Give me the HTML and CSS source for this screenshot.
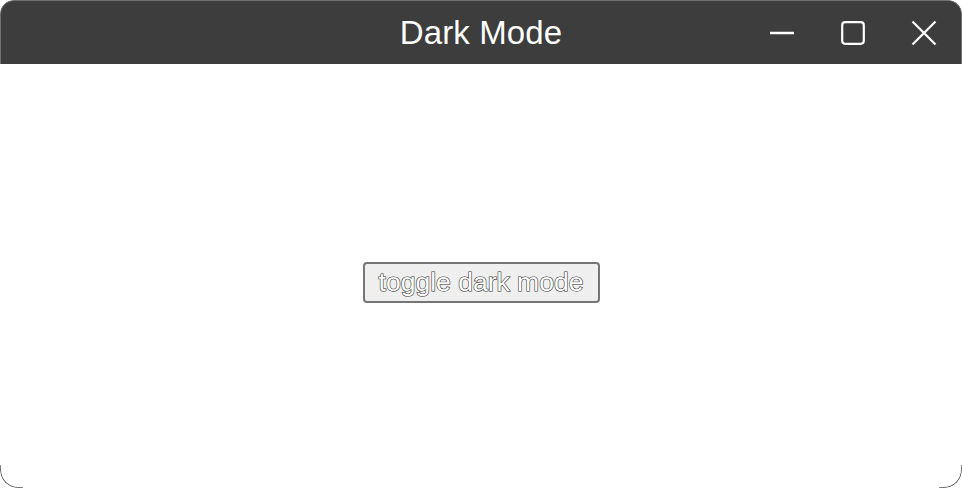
FILE: index.html
```html
<!doctype html>
<html lang="en">
<head>
	<meta charset="UTF-8">
	<title>Dark Mode</title>
	<link rel="stylesheet" href="styles.css">
</head>
<body>
	<div class="window">
		<div class="titlebar">
			<div class="title">Dark Mode</div>
			<div class="controls">
				<span class="ctl ctl_min">
					<svg width="26" height="26" viewBox="0 0 26 26"><path d="M1 13h24" stroke="#fff" stroke-width="2.6" fill="none"/></svg>
				</span>
				<span class="ctl ctl_max">
					<svg width="26" height="26" viewBox="0 0 26 26"><rect x="2.2" y="2.2" width="21.6" height="21.6" rx="3" stroke="#fff" stroke-width="2.2" fill="none"/></svg>
				</span>
				<span class="ctl ctl_close">
					<svg width="26" height="26" viewBox="0 0 26 26"><path d="M1.5 1.5l23 23M24.5 1.5l-23 23" stroke="#fff" stroke-width="2.2" fill="none"/></svg>
				</span>
			</div>
		</div>
		<div class="content">
			<button class="toggle">toggle dark mode</button>
		</div>
	</div>
</body>
</html>
```

FILE: styles.css
```css
html,body{margin: 0;padding: 0;background-color: #fff;}
body{font-family: 'Liberation Sans', Arial, sans-serif;}
.window{
	position: relative;
	width: 962px;
	height: 488px;
	display: flex;
	flex-direction: column;
	border-radius: 14px 14px 18px 18px;
	overflow: hidden;
	background-color: #fff;
}
.window:before,
.window:after{
	content: '';
	position: absolute;
	bottom: 0;
	width: 22px;
	height: 22px;
	border-bottom: 1px solid #555;
}
.window:before{
	left: 0;
	border-left: 1px solid #555;
	border-bottom-left-radius: 18px;
	-webkit-mask: linear-gradient(45deg, #000 35%, transparent 80%);
}
.window:after{
	right: 0;
	border-right: 1px solid #555;
	border-bottom-right-radius: 18px;
	-webkit-mask: linear-gradient(-45deg, #000 35%, transparent 80%);
}
.titlebar{
	position: relative;
	height: 64px;
	box-sizing: border-box;
	border: 1px solid #707070;
	border-bottom: 0;
	border-radius: 14px 14px 0 0;
	background-color: #3d3d3d;
	display: flex;
	align-items: center;
	justify-content: center;
}
.title{
	color: #fff;
	font-size: 33px;
	letter-spacing: 0.1px;
	padding-top: 1px;
}
.controls{
	position: absolute;
	top: 19px;
	right: 24px;
	display: flex;
	gap: 45px;
}
.ctl{
	display: block;
	width: 26px;
	height: 26px;
}
.ctl svg{display: block;}
.content{
	flex: 1;
	display: flex;
	align-items: center;
	justify-content: center;
	padding-top: 12px;
}
.toggle{
	width: 237px;
	height: 41px;
	padding: 0;
	border: 2px solid #767676;
	border-radius: 4px;
	background-color: #efefef;
	font-family: 'Liberation Sans', Arial, sans-serif;
	font-size: 26.5px;
	color: #fff;
	-webkit-text-stroke: 1.2px #333;
	paint-order: stroke fill;
}
```
